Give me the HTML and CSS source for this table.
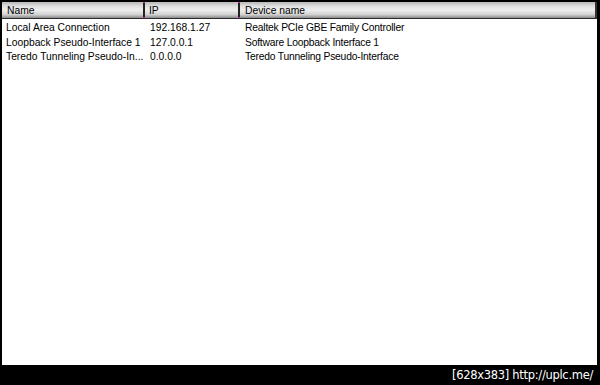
FILE: index.html
```html
<!DOCTYPE html>
<html>
<head>
<meta charset="utf-8">
<link rel="stylesheet" href="styles.css">
</head>
<body>
<div class="frame">
  <div class="panel">
    <div class="header">
      <div class="hcell c-name">Name</div>
      <div class="sep"></div>
      <div class="hcell c-ip">IP</div>
      <div class="sep"></div>
      <div class="hcell c-dev">Device name</div>
    </div>
    <div class="rows">
      <div class="row"><div class="cell c-name">Local Area Connection</div><div class="cell c-ip">192.168.1.27</div><div class="cell c-dev">Realtek PCIe GBE Family Controller</div></div>
      <div class="row"><div class="cell c-name">Loopback Pseudo-Interface 1</div><div class="cell c-ip">127.0.0.1</div><div class="cell c-dev">Software Loopback Interface 1</div></div>
      <div class="row"><div class="cell c-name">Teredo Tunneling Pseudo-In...</div><div class="cell c-ip">0.0.0.0</div><div class="cell c-dev">Teredo Tunneling Pseudo-Interface</div></div>
    </div>
  </div>
  <div class="footer">[628x383] http://uplc.me/</div>
</div>
</body>
</html>
```
FILE: styles.css
```css
html, body {
  margin: 0;
  padding: 0;
  background: #000;
}
.frame {
  width: 600px;
  height: 385px;
  display: flex;
  flex-direction: column;
  box-sizing: border-box;
  padding: 2px 3px 0 2px;
}
.panel {
  flex: 1;
  background: #fff;
  display: flex;
  flex-direction: column;
  font-family: "Liberation Sans", Arial, sans-serif;
  font-size: 10.3px;
  color: #000;
}
.header {
  display: flex;
  height: 16px;
  border-bottom: 1px solid #2a2a2a;
  border-right: 2px solid #333;
  background: linear-gradient(#b8b8b8 0%, #dedede 25%, #eeeeee 50%, #d2d2d2 78%, #8a8a8a 100%);
}
.hcell {
  line-height: 17px;
  padding-left: 5px;
  box-sizing: border-box;
}
.header .c-name { width: 141px; }
.header .c-ip { width: 93px; padding-left: 4px; }
.header .c-dev { flex: 1; padding-left: 5px; }
.sep {
  width: 2px;
  background: #222;
  border-top: 1px solid #d020c0;
  border-bottom: 1px solid #d020c0;
  box-sizing: border-box;
}
.rows {
  padding-top: 2px;
}
.row {
  display: flex;
  height: 14.5px;
  line-height: 14.5px;
  white-space: nowrap;
}
.cell {
  box-sizing: border-box;
  overflow: hidden;
}
.row .c-name { width: 143px; padding-left: 4px; }
.row .c-ip { width: 95px; padding-left: 5px; }
.row .c-dev { flex: 1; padding-left: 5px; letter-spacing: -0.2px; }
.footer {
  height: 20px;
  line-height: 20px;
  color: #fff;
  text-align: right;
  padding-right: 4px;
  font-family: "DejaVu Sans", sans-serif;
  font-size: 11.5px;
  letter-spacing: -0.3px;
}
```
